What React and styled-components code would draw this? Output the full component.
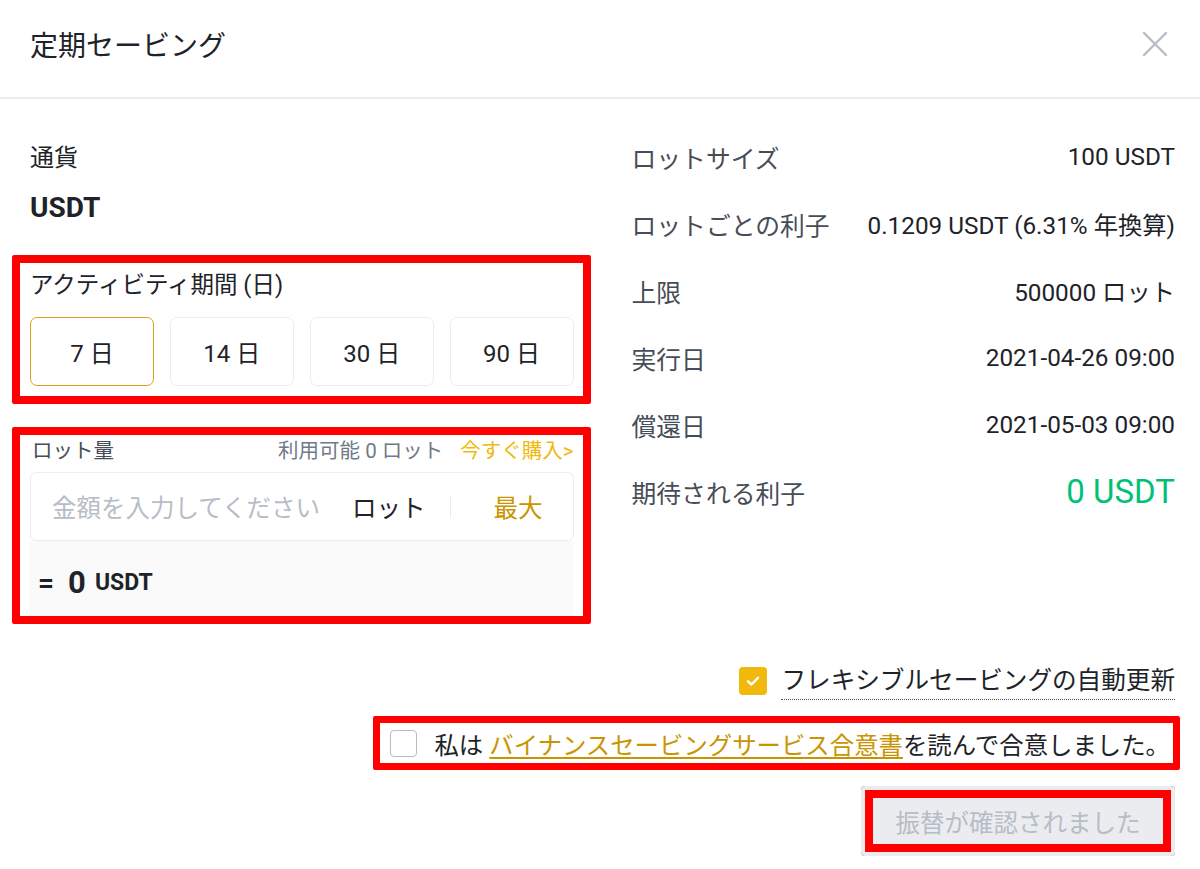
import React from 'react'
import styled, { createGlobalStyle } from 'styled-components'

const GlobalStyle = createGlobalStyle`
* { box-sizing: border-box; }
html, body { margin: 0; padding: 0; background: #fff; }
body {
  font-family: Roboto, "Noto Sans CJK JP", sans-serif;
  color: #1e2329;
}
`

const durations = ['7', '14', '30', '90']

const details = [
  { label: 'ロットサイズ', value: '100 USDT' },
  { label: 'ロットごとの利子', value: '0.1209 USDT (6.31% 年換算)' },
  { label: '上限', value: '500000 ロット' },
  { label: '実行日', value: '2021-04-26 09:00' },
  { label: '償還日', value: '2021-05-03 09:00' },
  { label: '期待される利子', value: '0 USDT', green: true },
]

function App() {
  return (
    <>
      <GlobalStyle />
      <Modal>
        <Header>
          <Title>定期セービング</Title>
          <Close aria-label="close">
            <svg width="26" height="26" viewBox="0 0 26 26">
              <path d="M2 2 L24 24 M24 2 L2 24" stroke="#b7bdc6" strokeWidth="2.4" strokeLinecap="round" />
            </svg>
          </Close>
        </Header>

        <Body>
          <LeftCol>
            <FieldLabel>通貨</FieldLabel>
            <Coin>USDT</Coin>

            <Marked $top={30} $pb={10}>
              <SectionLabel>アクティビティ期間 (日)</SectionLabel>
              <Durations>
                {durations.map((d, i) => (
                  <DayButton key={d} $active={i === 0}>{d} 日</DayButton>
                ))}
              </Durations>
            </Marked>

            <Marked $top={23} $pt={2} $pb={0}>
              <LotHead>
                <LotLabel>ロット量</LotLabel>
                <LotRight>
                  <Avail>利用可能 0 ロット</Avail>
                  <BuyLink>今すぐ購入&gt;</BuyLink>
                </LotRight>
              </LotHead>
              <InputBox>
                <Placeholder>金額を入力してください</Placeholder>
                <Unit>ロット</Unit>
                <Divider />
                <MaxBtn>最大</MaxBtn>
              </InputBox>
              <Result>
                <Eq>=</Eq>
                <Big>0</Big>
                <Small>USDT</Small>
              </Result>
            </Marked>
          </LeftCol>

          <RightCol>
            {details.map((d) => (
              <InfoRow key={d.label}>
                <InfoLabel>{d.label}</InfoLabel>
                <InfoValue $green={d.green}>{d.value}</InfoValue>
              </InfoRow>
            ))}
          </RightCol>
        </Body>

        <Footer>
          <AutoRow>
            <CheckBox $checked>
              <svg width="16" height="16" viewBox="0 0 16 16">
                <path d="M3 8.3 L6.5 11.5 L13 4.8" stroke="#fff" strokeWidth="2.4" fill="none" strokeLinecap="round" strokeLinejoin="round" />
              </svg>
            </CheckBox>
            <AutoText>フレキシブルセービングの自動更新</AutoText>
          </AutoRow>

          <Agree>
            <CheckBox />
            <AgreeText>
              私は <AgreeLink>バイナンスセービングサービス合意書</AgreeLink>を読んで合意しました。
            </AgreeText>
          </Agree>

          <Confirm disabled>振替が確認されました</Confirm>
        </Footer>
      </Modal>
    </>
  )
}

export default App

const Modal = styled.div`
width:1200px;
height:869px;
background:#fff;
display:flex;
flex-direction:column;
`

const Header = styled.div`
height:99px;
flex-shrink:0;
display:flex;
justify-content:space-between;
align-items:center;
padding:0 32px 10px 30px;
border-bottom:2px solid #eaecef;
`

const Title = styled.div`
font-size:28px;
font-weight:400;
color:#1e2329;
`

const Close = styled.div`
display:flex;
align-items:center;
cursor:pointer;
`

const Body = styled.div`
display:grid;
grid-template-columns:1fr 1fr;
column-gap:58px;
padding:24px 25px 0 30px;
align-items:start;
`

const LeftCol = styled.div`
display:flex;
flex-direction:column;
padding-top:18px;
`

const FieldLabel = styled.div`
font-size:24px;
line-height:34px;
color:#1e2329;
`

const Coin = styled.div`
margin-top:16px;
font-size:28px;
line-height:34px;
font-weight:700;
`

/* red annotation frame around a section */
const Marked = styled.div`
margin:${(p) => p.$top}px -17px 0 -18px;
border:8px solid #ff0000;
border-radius:2px;
padding:${(p) => (p.$pt ?? 7)}px 9px ${(p) => p.$pb}px 10px;
`

const SectionLabel = styled.div`
font-size:23.5px;
line-height:30px;
color:#1e2329;
`

const Durations = styled.div`
margin-top:17px;
display:grid;
grid-template-columns:repeat(4, 1fr);
column-gap:16px;
`

const DayButton = styled.div`
height:69px;
display:flex;
align-items:center;
justify-content:center;
border:1.5px solid ${(p) => (p.$active ? '#d9a21b' : '#eaecef')};
border-radius:7px;
font-size:24px;
font-weight:400;
color:#1e2329;
`

const LotHead = styled.div`
display:flex;
justify-content:space-between;
align-items:center;
line-height:28px;
font-size:20.5px;
`

const LotLabel = styled.span`
color:#474d57;
margin-left:2px;
`

const LotRight = styled.div`
display:flex;
column-gap:17px;
`

const Avail = styled.span`
color:#707a8a;
`

const BuyLink = styled.span`
color:#f0b90b;
`

const InputBox = styled.div`
margin-top:7px;
height:69px;
display:flex;
align-items:center;
border:1.5px solid #eaecef;
border-radius:6px;
padding:0 30px 0 21px;
font-size:24.5px;
background:#fff;
`

const Placeholder = styled.span`
flex:1;
color:#b7bdc6;
`

const Unit = styled.span`
color:#1e2329;
`

const Divider = styled.span`
width:1px;
height:22px;
background:#eaecef;
margin:0 43px 0 24px;
`

const MaxBtn = styled.span`
color:#c99400;
`

const Result = styled.div`
height:75px;
background:#fafafa;
display:flex;
align-items:center;
padding:8px 0 0 8px;
font-weight:700;
color:#1e2329;
`

const Eq = styled.span`
font-size:28px;
margin-right:14px;
`

const Big = styled.span`
font-size:31px;
margin-right:9px;
`

const Small = styled.span`
font-size:23px;
`

const RightCol = styled.div`
display:flex;
flex-direction:column;
`

const InfoRow = styled.div`
height:67px;
display:flex;
justify-content:space-between;
align-items:center;
font-size:24px;
`

const InfoLabel = styled.span`
color:#474d57;
font-size:24.8px;
`

const InfoValue = styled.span`
color:${(p) => (p.$green ? '#02c076' : '#1e2329')};
font-size:${(p) => (p.$green ? '33px' : '24.3px')};
font-weight:400;
`

const Footer = styled.div`
display:flex;
flex-direction:column;
align-items:flex-end;
padding:37px 25px 0 30px;
`

const AutoRow = styled.div`
display:flex;
align-items:center;
column-gap:14px;
`

const CheckBox = styled.span`
width:${(p) => (p.$checked ? 28 : 27)}px;
height:${(p) => (p.$checked ? 28 : 27)}px;
border-radius:4px;
display:flex;
align-items:center;
justify-content:center;
flex-shrink:0;
background:${(p) => (p.$checked ? '#f0b90b' : '#fff')};
border:${(p) => (p.$checked ? 'none' : '1.5px solid #b7bdc6')};
`

const AutoText = styled.span`
font-size:24.6px;
line-height:36px;
color:#1e2329;
padding-top:2px;
border-bottom:1.5px dotted #474d57;
`

const Agree = styled.div`
margin:16px -5px 0 0;
height:54px;
display:flex;
align-items:center;
column-gap:17px;
border:7px solid #ff0000;
border-radius:2px;
padding:0 3px 0 10px;
`

const AgreeText = styled.span`
font-size:24.4px;
color:#1e2329;
white-space:nowrap;
`

const AgreeLink = styled.a`
color:#c99400;
text-decoration:underline;
text-underline-offset:3px;
cursor:pointer;
`

const Confirm = styled.button`
margin-top:16px;
width:314px;
height:70px;
border:none;
border-radius:4px;
background:#eaecef;
color:#b7bdc6;
font-family:inherit;
font-size:24.5px;
box-shadow:inset 0 0 0 4px #eaecef, inset 0 0 0 12px #ff0000;
`
